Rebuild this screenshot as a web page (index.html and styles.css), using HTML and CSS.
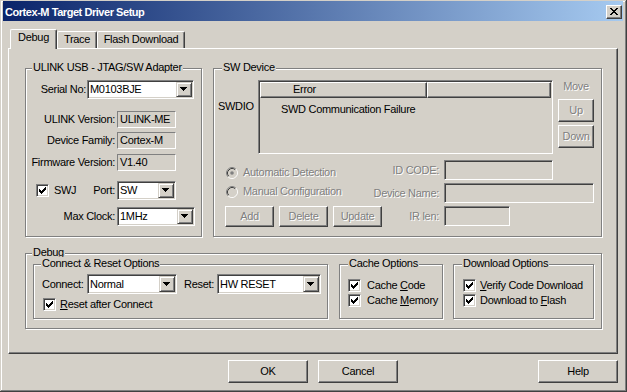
FILE: index.html
```html
<!DOCTYPE html>
<html>
<head>
<meta charset="utf-8">
<title>Cortex-M Target Driver Setup</title>
<link rel="stylesheet" href="styles.css">
</head>
<body>
<div class="window">
  <div class="titlebar">
    <span class="title-text">Cortex-M Target Driver Setup</span>
    <div class="closebtn"><svg width="8" height="7" viewBox="0 0 8 7"><path d="M0 0h2v1h-2z M6 0h2v1h-2z M1 1h2v1h-2z M5 1h2v1h-2z M2 2h4v1h-4z M3 3h2v1h-2z M2 4h4v1h-4z M1 5h2v1h-2z M5 5h2v1h-2z M0 6h2v1h-2z M6 6h2v1h-2z" fill="#000"/></svg></div>
  </div>

  <div class="tabs">
    <div class="tab active t-debug">Debug</div>
    <div class="tab t-trace">Trace</div>
    <div class="tab t-flash">Flash Download</div>
  </div>

  <div class="panel">
    <div class="toprow">
      <div class="group ulink">
        <div class="legend lg6">ULINK USB - JTAG/SW Adapter</div>
        <div class="urow ur1">
          <span class="lbl lbl-serial">Serial No:</span>
          <div class="combo w107 gap1"><span class="ctext">M0103BJE</span><span class="ddbtn"><svg width="8" height="5" viewBox="0 0 8 5"><path d="M0 0h7v1h-1v1h-1v1h-1v1h-1v-1h-1v-1h-1v-1h-1z"/></svg></span></div>
        </div>
        <div class="urow ur2">
          <span class="lbl">ULINK Version:</span>
          <div class="static gap2">ULINK-ME</div>
        </div>
        <div class="urow ur3">
          <span class="lbl">Device Family:</span>
          <div class="static gap2">Cortex-M</div>
        </div>
        <div class="urow ur4">
          <span class="lbl">Firmware Version:</span>
          <div class="static gap2">V1.40</div>
        </div>
        <div class="urow ur5">
          <div class="lbl lbl-swj">
            <span class="chk"><svg width="11" height="11" viewBox="1 1 11 11"><path d="M3 5h1v3h-1z M4 6h1v3h-1z M5 7h1v3h-1z M6 6h1v3h-1z M7 5h1v3h-1z M8 4h1v3h-1z M9 3h1v3h-1z"/></svg></span>
            <span class="swj">SWJ</span>
            <span class="port">Port:</span>
          </div>
          <div class="combo w59 gap2"><span class="ctext">SW</span><span class="ddbtn"><svg width="8" height="5" viewBox="0 0 8 5"><path d="M0 0h7v1h-1v1h-1v1h-1v1h-1v-1h-1v-1h-1v-1h-1z"/></svg></span></div>
        </div>
        <div class="urow ur6">
          <span class="lbl">Max Clock:</span>
          <div class="combo w78 gap2"><span class="ctext">1MHz</span><span class="ddbtn"><svg width="8" height="5" viewBox="0 0 8 5"><path d="M0 0h7v1h-1v1h-1v1h-1v1h-1v-1h-1v-1h-1v-1h-1z"/></svg></span></div>
        </div>
      </div>

      <div class="group sw">
        <div class="legend lg8">SW Device</div>
        <div class="rowa">
          <span class="swdio">SWDIO</span>
          <div class="list">
            <div class="lhead">
              <div class="hcol hc1">Error</div>
              <div class="hcol hc2"></div>
            </div>
            <div class="lrow">SWD Communication Failure</div>
          </div>
          <div class="movecol">
            <span class="dis">Move</span>
            <div class="btn dis sbtn up">Up</div>
            <div class="btn dis sbtn down">Down</div>
          </div>
        </div>
        <div class="rowb">
          <div class="radio rd1">
            <svg width="12" height="12" viewBox="0 0 12 12"><circle cx="6" cy="6" r="4.5" fill="#D4D0C8"/><path d="M2.11 9.89A5.5 5.5 0 0 1 9.89 2.11" stroke="#808080" fill="none"/><path d="M9.89 2.11A5.5 5.5 0 0 1 2.11 9.89" stroke="#fff" fill="none"/><path d="M2.82 9.18A4.5 4.5 0 0 1 9.18 2.82" stroke="#404040" fill="none"/><path d="M9.18 2.82A4.5 4.5 0 0 1 2.82 9.18" stroke="#D4D0C8" fill="none"/><circle cx="6" cy="6" r="1.8" fill="#808080"/></svg>
            <span class="dis rtext">Automatic Detection</span>
          </div>
          <span class="flbl dis">ID CODE:</span>
          <div class="edit w109"></div>

          <div class="radio rd2">
            <svg width="12" height="12" viewBox="0 0 12 12"><circle cx="6" cy="6" r="4.5" fill="#D4D0C8"/><path d="M2.11 9.89A5.5 5.5 0 0 1 9.89 2.11" stroke="#808080" fill="none"/><path d="M9.89 2.11A5.5 5.5 0 0 1 2.11 9.89" stroke="#fff" fill="none"/><path d="M2.82 9.18A4.5 4.5 0 0 1 9.18 2.82" stroke="#404040" fill="none"/><path d="M9.18 2.82A4.5 4.5 0 0 1 2.82 9.18" stroke="#D4D0C8" fill="none"/></svg>
            <span class="dis rtext">Manual Configuration</span>
          </div>
          <span class="flbl dis">Device Name:</span>
          <div class="edit w150"></div>

          <div class="btns3">
            <div class="btn dis b49">Add</div>
            <div class="btn dis b49 ml5">Delete</div>
            <div class="btn dis b49 ml5">Update</div>
            <span class="dis irlen">IR len:</span>
          </div>
          <div class="edit w66"></div>
        </div>
      </div>
    </div>

    <div class="group dbg">
      <div class="legend lg6">Debug</div>
      <div class="subrow">
        <div class="group cr">
          <div class="legend lg7">Connect &amp; Reset Options</div>
          <div class="crrow1">
            <span class="conlbl">Connect:</span>
            <div class="combo h20 w90"><span class="ctext">Normal</span><span class="ddbtn"><svg width="8" height="5" viewBox="0 0 8 5"><path d="M0 0h7v1h-1v1h-1v1h-1v1h-1v-1h-1v-1h-1v-1h-1z"/></svg></span></div>
            <span class="rstlbl">Reset:</span>
            <div class="combo h20 w104"><span class="ctext">HW RESET</span><span class="ddbtn"><svg width="8" height="5" viewBox="0 0 8 5"><path d="M0 0h7v1h-1v1h-1v1h-1v1h-1v-1h-1v-1h-1v-1h-1z"/></svg></span></div>
          </div>
          <div class="cbrow crrow2">
            <span class="chk"><svg width="11" height="11" viewBox="1 1 11 11"><path d="M3 5h1v3h-1z M4 6h1v3h-1z M5 7h1v3h-1z M6 6h1v3h-1z M7 5h1v3h-1z M8 4h1v3h-1z M9 3h1v3h-1z"/></svg></span>
            <span class="ctl4"><u>R</u>eset after Connect</span>
          </div>
        </div>

        <div class="group cache">
          <div class="legend lg8">Cache Options</div>
          <div class="cbrow cb1">
            <span class="chk"><svg width="11" height="11" viewBox="1 1 11 11"><path d="M3 5h1v3h-1z M4 6h1v3h-1z M5 7h1v3h-1z M6 6h1v3h-1z M7 5h1v3h-1z M8 4h1v3h-1z M9 3h1v3h-1z"/></svg></span>
            <span class="ctl6">Cache <u>C</u>ode</span>
          </div>
          <div class="cbrow cb2">
            <span class="chk"><svg width="11" height="11" viewBox="1 1 11 11"><path d="M3 5h1v3h-1z M4 6h1v3h-1z M5 7h1v3h-1z M6 6h1v3h-1z M7 5h1v3h-1z M8 4h1v3h-1z M9 3h1v3h-1z"/></svg></span>
            <span class="ctl6">Cache <u>M</u>emory</span>
          </div>
        </div>

        <div class="group dl">
          <div class="legend lg8">Download Options</div>
          <div class="cbrow cb1">
            <span class="chk"><svg width="11" height="11" viewBox="1 1 11 11"><path d="M3 5h1v3h-1z M4 6h1v3h-1z M5 7h1v3h-1z M6 6h1v3h-1z M7 5h1v3h-1z M8 4h1v3h-1z M9 3h1v3h-1z"/></svg></span>
            <span class="ctl4"><u>V</u>erify Code Download</span>
          </div>
          <div class="cbrow cb2">
            <span class="chk"><svg width="11" height="11" viewBox="1 1 11 11"><path d="M3 5h1v3h-1z M4 6h1v3h-1z M5 7h1v3h-1z M6 6h1v3h-1z M7 5h1v3h-1z M8 4h1v3h-1z M9 3h1v3h-1z"/></svg></span>
            <span class="ctl4">Download to <u>F</u>lash</span>
          </div>
        </div>
      </div>
    </div>
  </div>

  <div class="btnrow">
    <div class="btn dlg">OK</div>
    <div class="btn dlg cancel">Cancel</div>
    <div class="btn dlg help">Help</div>
  </div>
</div>
</body>
</html>
```

FILE: styles.css
```css
* { box-sizing: border-box; margin: 0; padding: 0; }
html, body { width: 627px; height: 392px; overflow: hidden; }
body {
  background: #D4D0C8;
  font-family: "Liberation Sans", Arial, sans-serif;
  font-size: 11px;
  line-height: 13px;
  letter-spacing: -0.3px;
  color: #000;
}
u { text-decoration: underline; text-underline-offset: 1px; }
svg { display: block; }

.window {
  width: 627px;
  height: 392px;
  padding: 1px 4px 4px 3px;
  display: flex;
  flex-direction: column;
  box-shadow: inset -1px -1px 0 #404040, inset 1px 1px 0 #D4D0C8, inset -2px -2px 0 #808080, inset 2px 2px 0 #fff;
}

/* title bar */
.titlebar {
  flex: none;
  height: 20px;
  display: flex;
  align-items: flex-start;
  padding-left: 2px;
  background: linear-gradient(to right, #0A246A, #A6CAF0);
}
.title-text { color: #fff; font-weight: bold; letter-spacing: -0.45px; margin-top: 5px; white-space: nowrap; }
.closebtn {
  margin: 4px 1px 0 auto;
  width: 16px;
  height: 14px;
  background: #D4D0C8;
  border: 1px solid;
  border-color: #fff #404040 #404040 #fff;
  box-shadow: inset -1px -1px 0 #808080;
  padding: 2px 0 0 3px;
}

/* tabs */
.tabs {
  flex: none;
  height: 19px;
  margin-top: 8px;
  padding-left: 7px;
  display: flex;
  align-items: flex-end;
}
.tab {
  height: 17px;
  border: 1px solid;
  border-bottom: 0;
  border-color: #fff #404040 #404040 #fff;
  box-shadow: inset -1px 0 0 #808080;
  border-radius: 2px 2px 0 0;
  text-align: center;
  padding-top: 1px;
  background: #D4D0C8;
  white-space: nowrap;
}
.tab.active { height: 20px; margin-bottom: -1px; position: relative; z-index: 1; }
.t-debug { width: 47px; }
.t-trace { width: 40px; }
.t-flash { width: 88px; }

.panel {
  flex: none;
  margin-left: 5px;
  width: 610px;
  height: 306px;
  border: 1px solid;
  border-color: #fff #404040 #404040 #fff;
  box-shadow: inset -1px -1px 0 #808080;
  padding: 19px 0 0 16px;
}

/* group boxes */
.group {
  flex: none;
  border: 1px solid #808080;
  box-shadow: 1px 1px 0 #fff, inset 1px 1px 0 #fff;
}
.legend {
  display: table;
  background: #D4D0C8;
  padding: 0 1px;
  margin-top: -8px;
  white-space: nowrap;
}
.lg6 { margin-left: 6px; }
.lg7 { margin-left: 7px; }
.lg8 { margin-left: 8px; }

.toprow { display: flex; gap: 11px; }
.ulink { width: 177px; height: 169px; }
.sw { width: 389px; height: 169px; }

/* ULINK rows */
.urow { display: flex; align-items: center; }
.ur1 { margin-top: 6px; height: 19px; }
.ur2 { margin-top: 12px; height: 17px; }
.ur3 { margin-top: 4px; height: 17px; }
.ur4 { margin-top: 5px; height: 17px; }
.ur5 { margin-top: 10px; height: 19px; }
.ur6 { margin-top: 7px; height: 19px; }
.lbl { width: 89px; flex: none; text-align: right; white-space: nowrap; }
.lbl-serial { width: 60px; }
.lbl-swj { display: flex; align-items: center; text-align: left; }
.lbl-swj .chk { margin-left: 10px; }
.swj { margin-left: 5px; }
.port { margin-left: auto; }
.gap1 { margin-left: 1px; }
.gap2 { margin-left: 2px; }

.static {
  width: 59px;
  height: 17px;
  border: 1px solid;
  border-color: #808080 #fff #fff #808080;
  padding-left: 2px;
  line-height: 15px;
  white-space: nowrap;
  overflow: hidden;
}

/* combo boxes */
.combo {
  flex: none;
  display: flex;
  height: 19px;
  background: #fff;
  border: 1px solid;
  border-color: #808080 #fff #fff #808080;
  box-shadow: inset 1px 1px 0 #404040, inset -1px -1px 0 #D4D0C8;
  padding: 1px;
}
.combo.h20 { height: 20px; }
.ctext { flex: 1; padding-left: 1px; align-self: center; white-space: nowrap; }
.ddbtn {
  width: 16px;
  flex: none;
  display: flex;
  justify-content: center;
  align-items: center;
  background: #D4D0C8;
  border: 1px solid;
  border-color: #D4D0C8 #404040 #404040 #D4D0C8;
  box-shadow: inset 1px 1px 0 #fff, inset -1px -1px 0 #808080;
}
.w59 { width: 59px; }
.w78 { width: 78px; }
.w90 { width: 90px; }
.w104 { width: 104px; }
.w107 { width: 107px; }

/* check boxes */
.chk {
  width: 13px;
  height: 13px;
  flex: none;
  background: #fff;
  border: 1px solid;
  border-color: #808080 #fff #fff #808080;
  box-shadow: inset 1px 1px 0 #404040, inset -1px -1px 0 #D4D0C8;
}
.cbrow { display: flex; align-items: center; height: 13px; white-space: nowrap; }
.ctl4 { margin-left: 4px; }
.ctl6 { margin-left: 6px; }

/* buttons */
.btn {
  flex: none;
  display: flex;
  align-items: center;
  justify-content: center;
  background: #D4D0C8;
  border: 1px solid;
  border-color: #fff #404040 #404040 #fff;
  box-shadow: inset -1px -1px 0 #808080;
  white-space: nowrap;
}
.dis { color: #808080; text-shadow: 1px 1px 0 #fff; white-space: nowrap; }

/* SW device */
.rowa { display: flex; align-items: flex-start; margin-top: 6px; }
.swdio { width: 40px; flex: none; margin: 20px 0 0 4px; }
.list {
  width: 295px;
  height: 74px;
  flex: none;
  border: 1px solid;
  border-color: #808080 #fff #fff #808080;
  box-shadow: inset 1px 1px 0 #404040, inset -1px -1px 0 #D4D0C8;
  padding: 1px;
}
.lhead { display: flex; height: 16px; }
.hcol {
  border: 1px solid;
  border-color: #fff #404040 #404040 #fff;
  box-shadow: inset -1px -1px 0 #808080;
}
.hc1 { width: 167px; padding-left: 32px; }
.hc2 { flex: 1; }
.lrow { padding: 5px 0 0 21px; white-space: nowrap; }
.movecol { width: 36px; flex: none; margin-left: 5px; display: flex; flex-direction: column; align-items: center; }
.sbtn { width: 36px; height: 23px; }
.up { margin-top: 6px; }
.down { margin-top: 3px; }

.rowb {
  display: grid;
  grid-template-columns: 157px 68px auto;
  grid-template-rows: 20px 20px 21px;
  row-gap: 3px;
  margin-top: 6px;
}
.radio { display: flex; align-items: center; height: 13px; padding-left: 12px; align-self: start; }
.rd1 { margin-top: 6px; }
.rd2 { margin-top: 2px; }
.rtext { margin-left: 5px; }
.flbl { text-align: right; align-self: center; }
.edit {
  height: 20px;
  margin-left: 5px;
  align-self: start;
  border: 1px solid;
  border-color: #808080 #fff #fff #808080;
  box-shadow: inset 1px 1px 0 #404040, inset -1px -1px 0 #D4D0C8;
  background: #D4D0C8;
}
.w109 { width: 109px; }
.w150 { width: 150px; }
.w66 { width: 66px; }
.btns3 { grid-column: 1 / 3; display: flex; align-items: center; padding-left: 11px; }
.b49 { width: 49px; height: 21px; }
.ml5 { margin-left: 5px; }
.irlen { margin-left: auto; }

/* debug group */
.dbg { width: 577px; height: 76px; margin-top: 16px; }
.subrow { display: flex; margin-top: 5px; padding-left: 7px; }
.cr { width: 295px; height: 55px; }
.cache { width: 104px; height: 55px; margin-left: 11px; }
.dl { width: 141px; height: 55px; margin-left: 10px; }
.crrow1 { display: flex; align-items: center; margin-top: 4px; padding-left: 8px; }
.conlbl { width: 45px; flex: none; white-space: nowrap; }
.rstlbl { width: 33px; flex: none; margin-left: 7px; white-space: nowrap; }
.crrow2 { margin-top: 4px; padding-left: 9px; }
.cache .cbrow { padding-left: 8px; }
.dl .cbrow { padding-left: 9px; }
.cb1 { margin-top: 9px; }
.cb2 { margin-top: 2px; }

/* dialog buttons */
.btnrow { flex: none; display: flex; margin-top: 6px; padding: 0 5px 0 225px; }
.dlg { width: 80px; height: 23px; }
.cancel { margin-left: 10px; }
.help { margin-left: auto; }
```
